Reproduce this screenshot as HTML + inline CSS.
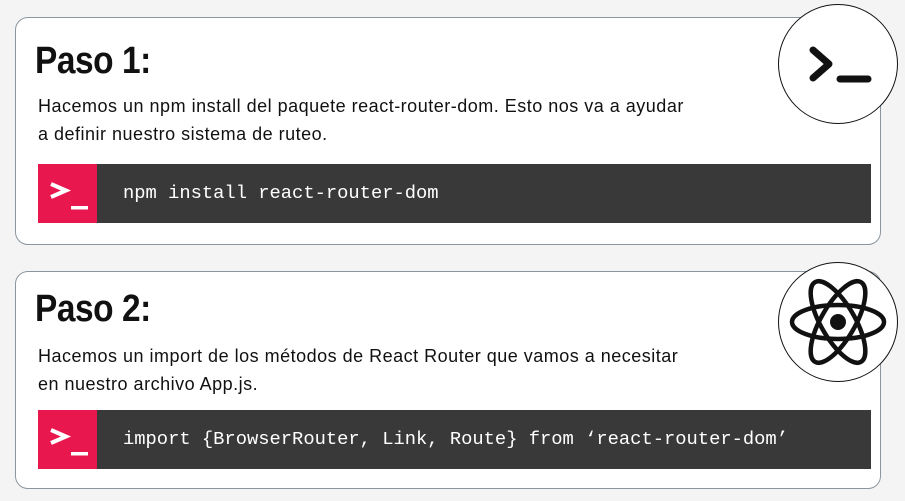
<!DOCTYPE html>
<html><head><style>
body{margin:0;width:905px;height:501px;background:#f4f4f4;position:relative;overflow:hidden;font-family:"Liberation Sans",sans-serif}
.card{position:absolute;left:15px;width:866px;background:#fff;border:1px solid #8a96a0;border-radius:13px;box-sizing:border-box}
.t{position:absolute;left:19px;font-weight:bold;font-size:38px;color:#111;transform:scaleX(0.88);transform-origin:left;letter-spacing:-0.5px}
.p{position:absolute;left:22px;font-size:18px;line-height:28px;color:#111;letter-spacing:0.5px;white-space:nowrap}
.bar{position:absolute;left:22px;width:833px;height:59px;background:#393939}
.pk{position:absolute;left:0;top:0;width:59px;height:59px;background:#e8174e}
.code{position:absolute;left:85px;top:0;line-height:59px;color:#fff;font-family:"Liberation Mono",monospace;font-size:18.8px}
.c{position:absolute;left:778px;width:120px;height:120px;border:1.5px solid #111;border-radius:50%;background:#fff;box-sizing:border-box}
</style></head><body>
<div class="card" style="top:17px;height:228px">
<div class="t" style="top:22px">Paso 1:</div>
<div class="p" style="top:74px">Hacemos un npm install del paquete react-router-dom. Esto nos va a ayudar<br>a definir nuestro sistema de ruteo.</div>
<div class="bar" style="top:146px"><div class="pk"><svg width="59" height="59"><path d="M13 20 L28 26.5 L13 33" stroke="#fff" stroke-width="4" fill="none"/><rect x="33" y="42" width="17" height="3.5" fill="#fff"/></svg></div><div class="code">npm install react-router-dom</div></div>
</div>
<div class="card" style="top:271px;height:218px">
<div class="t" style="top:16px">Paso 2:</div>
<div class="p" style="top:70px">Hacemos un import de los métodos de React Router que vamos a necesitar<br>en nuestro archivo App.js.</div>
<div class="bar" style="top:138px"><div class="pk"><svg width="59" height="59"><path d="M13 20 L28 26.5 L13 33" stroke="#fff" stroke-width="4" fill="none"/><rect x="33" y="42" width="17" height="3.5" fill="#fff"/></svg></div><div class="code">import {BrowserRouter, Link, Route} from ‘react-router-dom’</div></div>
</div>
<div class="c" style="top:4px"><svg width="117" height="117"><path d="M34 45 L50 59 L34 73" stroke="#111" stroke-width="7" stroke-linecap="round" stroke-linejoin="round" fill="none"/><path d="M61 74 L89 74" stroke="#111" stroke-width="7" stroke-linecap="round"/></svg></div>
<div class="c" style="top:262px"><svg width="117" height="117"><g fill="none" stroke="#111" stroke-width="4.5" transform="translate(59 59)"><ellipse rx="46" ry="17"/><ellipse rx="46" ry="17" transform="rotate(60)"/><ellipse rx="46" ry="17" transform="rotate(-60)"/></g><circle cx="59" cy="59" r="8" fill="#111"/></svg></div>
</body></html>
